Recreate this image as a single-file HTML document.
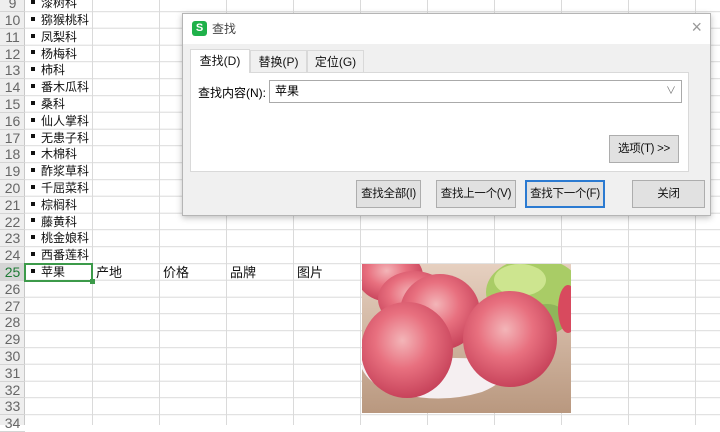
<!DOCTYPE html>
<html><head><meta charset="utf-8"><style>
*{margin:0;padding:0;box-sizing:border-box}
body{width:720px;height:425px;overflow:hidden;background:#fff;position:relative;font-family:"Liberation Sans","Noto Sans CJK SC",sans-serif;}
#grid{position:absolute;left:0;top:0;width:720px;height:425px;
background-image:
repeating-linear-gradient(to bottom,transparent 0,transparent 15.8px,#dadada 15.8px,#dadada 16.8px),
repeating-linear-gradient(to right,transparent 0,transparent 66px,#dadada 66px,#dadada 67px);
background-position:0 -4.8px,26px 0;}
#rh{position:absolute;left:0;top:0;width:25px;height:425px;background:#eeeeee;border-right:1px solid #c8c8c8;}
.rn{position:absolute;left:0;width:25px;height:16.8px;text-align:center;font-size:14px;line-height:16.8px;color:#666;border-bottom:1px solid #d4d4d4}
.c{position:absolute;left:31px;height:16.8px;font-size:12px;line-height:16.8px;color:#111;white-space:nowrap}
.c b{display:inline-block;width:4px;height:4px;background:#111;margin-right:6px;vertical-align:middle;position:relative;top:-2px}
.h{position:absolute;top:264px;height:17px;font-size:13px;line-height:17px;color:#111}
#dlg{position:absolute;left:182px;top:13px;width:529px;height:203px;background:#f0f0f0;border:1px solid #b5b5b5;box-shadow:0 2px 6px rgba(0,0,0,.25)}
#tb{height:30px;background:#fff;position:relative}
.btn{position:absolute;height:28px;border:1px solid #adadad;background:#e1e1e1;font-size:11.5px;text-align:center;line-height:26px;color:#111;white-space:nowrap;letter-spacing:-0.3px}
.tab{position:absolute;top:36px;height:22px;font-size:12px;line-height:22px;text-align:center;border:1px solid #d9d9d9;border-bottom:none;background:#f0f0f0;color:#111}
</style></head><body>
<div id="grid"></div>
<div id="rh"></div>
<div class="rn" style="top:-4.8px">9</div><div class="c" style="top:-4.8px"><b></b>漆树科</div>
<div class="rn" style="top:12px">10</div><div class="c" style="top:12px"><b></b>猕猴桃科</div>
<div class="rn" style="top:28.8px">11</div><div class="c" style="top:28.8px"><b></b>凤梨科</div>
<div class="rn" style="top:45.6px">12</div><div class="c" style="top:45.6px"><b></b>杨梅科</div>
<div class="rn" style="top:62.4px">13</div><div class="c" style="top:62.4px"><b></b>柿科</div>
<div class="rn" style="top:79.2px">14</div><div class="c" style="top:79.2px"><b></b>番木瓜科</div>
<div class="rn" style="top:96px">15</div><div class="c" style="top:96px"><b></b>桑科</div>
<div class="rn" style="top:112.8px">16</div><div class="c" style="top:112.8px"><b></b>仙人掌科</div>
<div class="rn" style="top:129.6px">17</div><div class="c" style="top:129.6px"><b></b>无患子科</div>
<div class="rn" style="top:146.4px">18</div><div class="c" style="top:146.4px"><b></b>木棉科</div>
<div class="rn" style="top:163.2px">19</div><div class="c" style="top:163.2px"><b></b>酢浆草科</div>
<div class="rn" style="top:180px">20</div><div class="c" style="top:180px"><b></b>千屈菜科</div>
<div class="rn" style="top:196.8px">21</div><div class="c" style="top:196.8px"><b></b>棕榈科</div>
<div class="rn" style="top:213.6px">22</div><div class="c" style="top:213.6px"><b></b>藤黄科</div>
<div class="rn" style="top:230.4px">23</div><div class="c" style="top:230.4px"><b></b>桃金娘科</div>
<div class="rn" style="top:247.2px">24</div><div class="c" style="top:247.2px"><b></b>西番莲科</div>
<div class="rn" style="top:264px;background:#d5d5d5;color:#1e7a35">25</div><div class="c" style="top:264px"><b></b>苹果</div>
<div class="rn" style="top:280.8px">26</div>
<div class="rn" style="top:297.6px">27</div>
<div class="rn" style="top:314.4px">28</div>
<div class="rn" style="top:331.2px">29</div>
<div class="rn" style="top:348px">30</div>
<div class="rn" style="top:364.8px">31</div>
<div class="rn" style="top:381.6px">32</div>
<div class="rn" style="top:398.4px">33</div>
<div class="rn" style="top:415.2px">34</div>
<div style="position:absolute;left:24px;top:263px;width:69px;height:19px;border:2px solid #3c9a4a"></div>
<div style="position:absolute;left:90px;top:279px;width:5px;height:5px;background:#3c9a4a"></div>
<div class="h" style="left:96px">产地</div>
<div class="h" style="left:163px">价格</div>
<div class="h" style="left:230px">品牌</div>
<div class="h" style="left:297px">图片</div>
<svg style="position:absolute;left:362px;top:264px" width="209" height="149" viewBox="0 0 209 149">
<defs>
<radialGradient id="a" cx="45%" cy="40%" r="65%"><stop offset="0" stop-color="#f3b5b8"/><stop offset=".45" stop-color="#e8707f"/><stop offset="1" stop-color="#c23c55"/></radialGradient>
<linearGradient id="bg" x1="0" y1="0" x2="0" y2="1"><stop offset="0" stop-color="#e6d0c0"/><stop offset="1" stop-color="#b9987f"/></linearGradient>
</defs>
<rect width="209" height="149" fill="url(#bg)"/>
<ellipse cx="172" cy="28" rx="48" ry="34" fill="#a9cc66"/>
<ellipse cx="158" cy="16" rx="26" ry="16" fill="#cde58f"/>
<ellipse cx="185" cy="55" rx="20" ry="15" fill="#8fb55a"/>
<ellipse cx="206" cy="45" rx="10" ry="24" fill="#d84a5e"/>
<path d="M0 105 Q10 125 40 130 Q80 140 120 128 Q140 120 150 105 L140 95 L0 92Z" fill="#f5eff1"/>
<ellipse cx="28" cy="12" rx="33" ry="26" fill="url(#a)"/>
<ellipse cx="52" cy="35" rx="36" ry="28" fill="url(#a)"/>
<ellipse cx="78" cy="48" rx="40" ry="38" fill="url(#a)"/>
<ellipse cx="45" cy="86" rx="46" ry="48" fill="url(#a)"/>
<ellipse cx="148" cy="75" rx="47" ry="48" fill="url(#a)"/>
</svg>
<div id="dlg">
<div id="tb">
<div style="position:absolute;left:9px;top:7px;width:15px;height:15px;background:#1fb14a;border-radius:3px;color:#fff;font-size:11px;font-weight:bold;text-align:center;line-height:15px">S</div>
<div style="position:absolute;left:29px;top:6px;font-size:12px;color:#444">查找</div>
<div style="position:absolute;right:8px;top:3px;font-size:18px;color:#999">×</div>
</div>
<div class="tab" style="left:7px;top:35px;width:60px;height:24px;background:#fff;z-index:2">查找(D)</div>
<div class="tab" style="left:67px;width:57px">替换(P)</div>
<div class="tab" style="left:124px;width:57px">定位(G)</div>
<div style="position:absolute;left:7px;top:58px;width:499px;height:100px;background:#fff;border:1px solid #d9d9d9">
<div style="position:absolute;left:7px;top:11px;font-size:12px">查找内容(N):</div>
<div style="position:absolute;left:78px;top:7px;width:413px;height:23px;border:1px solid #aaa;font-size:12px;line-height:21px;padding-left:5px">苹果<span style="position:absolute;right:5px;color:#777;font-size:10px">∨</span></div>
<div class="btn" style="left:418px;top:62px;width:70px">选项(T) &gt;&gt;</div>
</div>
<div class="btn" style="left:173px;top:166px;width:65px">查找全部(I)</div>
<div class="btn" style="left:253px;top:166px;width:80px">查找上一个(V)</div>
<div class="btn" style="left:342px;top:166px;width:80px;border:2px solid #2b7ad1;line-height:24px">查找下一个(F)</div>
<div class="btn" style="left:449px;top:166px;width:73px">关闭</div>
</div>
</body></html>
